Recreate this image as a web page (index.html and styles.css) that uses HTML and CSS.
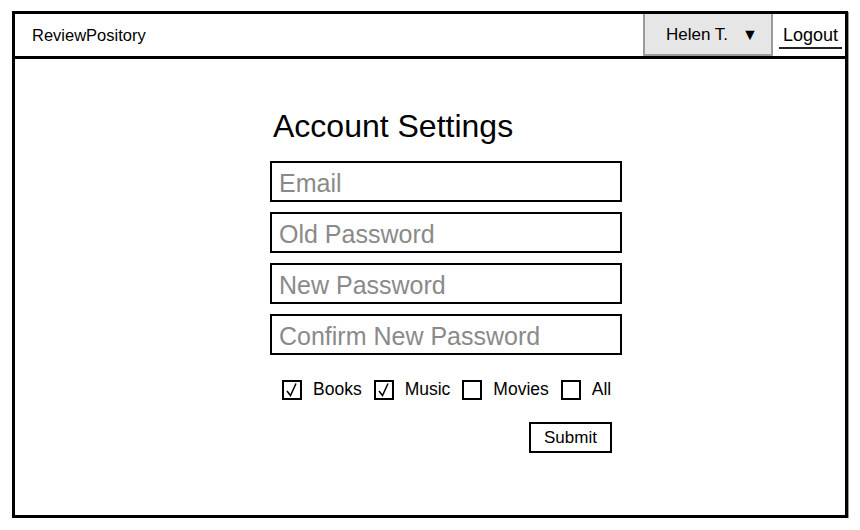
FILE: index.html
```html
<!DOCTYPE html>
<html lang="en">
<head>
<meta charset="utf-8">
<title>ReviewPository - Account Settings</title>
<link rel="stylesheet" href="styles.css">
</head>
<body>
<div class="frame">
  <header class="topbar">
    <div class="brand">ReviewPository</div>
    <div class="user-menu">Helen T.<span class="caret">▼</span></div>
    <a class="logout" href="#">Logout</a>
  </header>
  <main class="content">
    <form class="settings">
      <h1 class="title">Account Settings</h1>
      <div class="fields">
        <input class="field" type="text" placeholder="Email">
        <input class="field" type="password" placeholder="Old Password">
        <input class="field" type="password" placeholder="New Password">
        <input class="field" type="password" placeholder="Confirm New Password">
      </div>
      <div class="options">
        <label class="option"><span class="box"><svg viewBox="0 0 16 16" class="check"><polyline points="3,9 6.5,13.5 12,1.5" /></svg></span>Books</label>
        <label class="option"><span class="box"><svg viewBox="0 0 16 16" class="check"><polyline points="3,9 6.5,13.5 12,1.5" /></svg></span>Music</label>
        <label class="option"><span class="box"></span>Movies</label>
        <label class="option"><span class="box"></span>All</label>
      </div>
      <div class="actions">
        <button class="submit" type="button">Submit</button>
      </div>
    </form>
  </main>
</div>
</body>
</html>
```
FILE: styles.css
```css
html, body {
  margin: 0;
  padding: 0;
  background: #fff;
}
body {
  font-family: "Liberation Sans", Arial, sans-serif;
  color: #000;
}
.frame {
  box-sizing: border-box;
  width: 836px;
  height: 507px;
  margin: 11px 0 0 12px;
  border: 3px solid #000;
  box-shadow: 1px 1px 0 #9a9a9a;
  display: flex;
  flex-direction: column;
}
.topbar {
  box-sizing: border-box;
  height: 45px;
  border-bottom: 3px solid #000;
  display: flex;
  align-items: stretch;
}
.brand {
  flex: 1;
  display: flex;
  align-items: center;
  padding-left: 17px;
  font-size: 16.5px;
}
.user-menu {
  box-sizing: border-box;
  width: 130px;
  background: #e6e6e6;
  border: 2px solid #9c9c9c;
  border-top: 0;
  display: flex;
  align-items: center;
  justify-content: flex-end;
  padding: 2px 13px 0 0;
  font-size: 17px;
}
.caret {
  font-size: 16px;
  margin-left: 14px;
}
.logout {
  align-self: center;
  margin: 4px 3px 0 6px;
  padding: 0 4px 1px;
  color: #000;
  text-decoration: none;
  font-size: 18px;
  border-bottom: 2px solid #222;
}
.content {
  flex: 1;
  padding: 49px 0 0 255px;
}
.settings {
  width: 352px;
}
.title {
  margin: 0 0 16px 3px;
  font-size: 32px;
  line-height: 37px;
  font-weight: normal;
}
.fields {
  display: flex;
  flex-direction: column;
  gap: 10px;
}
.field {
  box-sizing: border-box;
  width: 352px;
  height: 41px;
  margin: 0;
  border: 2px solid #000;
  border-radius: 0;
  padding: 3px 0 0 7px;
  font-family: "Liberation Sans", Arial, sans-serif;
  font-size: 25px;
  color: #000;
  outline: none;
}
.field::placeholder {
  color: #8a8a8a;
  opacity: 1;
}
.options {
  display: flex;
  align-items: center;
  gap: 12px;
  margin: 24px 0 0 12px;
  font-size: 17.5px;
}
.option {
  display: flex;
  align-items: center;
  gap: 11px;
}
.box {
  box-sizing: border-box;
  width: 20px;
  height: 20px;
  border: 2px solid #000;
  display: flex;
  align-items: center;
  justify-content: center;
}
.check {
  width: 16px;
  height: 16px;
}
.check polyline {
  fill: none;
  stroke: #000;
  stroke-width: 1.5;
}
.actions {
  display: flex;
  justify-content: flex-end;
  margin-top: 22px;
  padding-right: 10px;
}
.submit {
  box-sizing: border-box;
  width: 83px;
  height: 31px;
  border: 2px solid #000;
  border-radius: 0;
  background: #fff;
  font-family: "Liberation Sans", Arial, sans-serif;
  font-size: 17px;
  color: #000;
  padding: 0;
}
```
